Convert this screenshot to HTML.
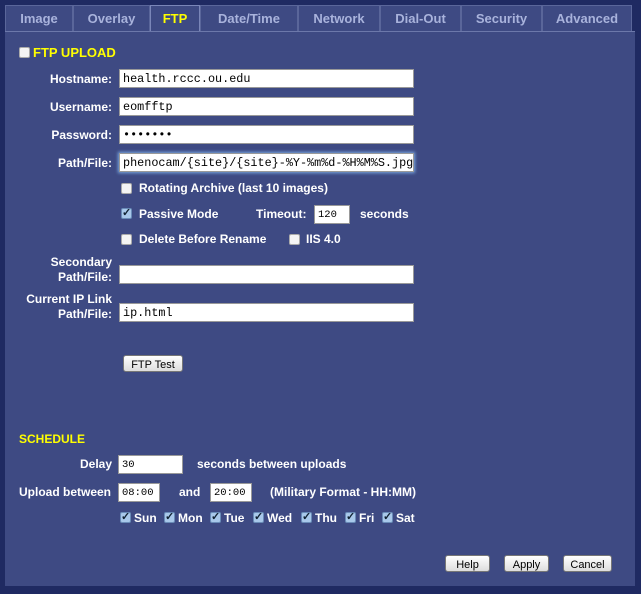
<!DOCTYPE html>
<html><head><style>
*{margin:0;padding:0;box-sizing:border-box}
body{width:641px;height:594px;background:#1f2a62;position:relative;overflow:hidden;font-family:"Liberation Sans",sans-serif;font-size:12px;font-weight:bold;color:#fff}
.a{position:absolute;white-space:nowrap}
.panel{position:absolute;left:5px;top:31px;width:630px;height:555px;background:#3e4a83;border-top:1px solid #6c78aa}
.tab{position:absolute;top:5px;height:26px;background:#3e4a83;border:1px solid #5a669a;border-bottom:none;color:#a9b3dc;font-size:13px;text-align:center;line-height:26px}
.r{text-align:right;width:112px;left:0}
.in{position:absolute;background:#fff;border:1px solid #999;height:19px;font-family:"Liberation Mono",monospace;font-weight:normal;color:#000;font-size:11.8px;display:flex;align-items:center;padding-left:3px;padding-top:1px;white-space:nowrap;overflow:hidden}
.sm{font-size:10.5px}
.cb{position:absolute;width:11px;height:11px;background:#f4f4f4;border:1px solid #aaa;border-radius:2px}
.ck{position:absolute;width:11px;height:11px;background:#a8c8ea;border:1px solid #6a8cb8;border-radius:2px;color:#123;font-size:11px;line-height:9px;text-align:center}
.btn{position:absolute;background:linear-gradient(#fff,#ddd);border:1px solid #777;border-radius:3px;color:#000;font-weight:normal;font-size:11px;display:flex;align-items:center;justify-content:center;height:17px;padding-top:2px}
.y{color:#ffff00}
</style></head><body>
<div class="panel"></div>
<div class="tab" style="left:5px;width:68px">Image</div>
<div class="tab" style="left:73px;width:77px">Overlay</div>
<div class="tab" style="left:150px;width:50px;color:#ffff00;border-color:#7a86b8">FTP</div>
<div class="tab" style="left:200px;width:98px">Date/Time</div>
<div class="tab" style="left:298px;width:82px">Network</div>
<div class="tab" style="left:380px;width:81px">Dial-Out</div>
<div class="tab" style="left:461px;width:81px">Security</div>
<div class="tab" style="left:542px;width:90px">Advanced</div>

<div class="cb" style="left:19px;top:47px"></div>
<div class="a y" style="left:33px;top:45px;font-size:13px">FTP UPLOAD</div>

<div class="a r" style="top:72px">Hostname:</div>
<div class="in" style="left:119px;top:69px;width:295px">health.rccc.ou.edu</div>
<div class="a r" style="top:100px">Username:</div>
<div class="in" style="left:119px;top:97px;width:295px">eomfftp</div>
<div class="a r" style="top:128px">Password:</div>
<div class="in" style="left:119px;top:125px;width:295px">•••••••</div>
<div class="a r" style="top:156px">Path/File:</div>
<div class="in" style="left:119px;top:153px;width:295px;box-shadow:0 0 3px 1px #7aa7e0">phenocam/{site}/{site}-%Y-%m%d-%H%M%S.jpg</div>

<div class="cb" style="left:121px;top:183px"></div>
<div class="a" style="left:139px;top:181px">Rotating Archive (last 10 images)</div>
<div class="ck" style="left:121px;top:208px">✓</div>
<div class="a" style="left:139px;top:207px">Passive Mode</div>
<div class="a" style="left:256px;top:207px">Timeout:</div>
<div class="in sm" style="left:314px;top:205px;width:36px">120</div>
<div class="a" style="left:360px;top:207px">seconds</div>
<div class="cb" style="left:121px;top:234px"></div>
<div class="a" style="left:139px;top:232px">Delete Before Rename</div>
<div class="cb" style="left:289px;top:234px"></div>
<div class="a" style="left:306px;top:232px">IIS 4.0</div>

<div class="a r" style="top:255px;line-height:15px">Secondary<br>Path/File:</div>
<div class="in" style="left:119px;top:265px;width:295px"></div>
<div class="a r" style="top:292px;line-height:15px">Current IP Link<br>Path/File:</div>
<div class="in" style="left:119px;top:303px;width:295px">ip.html</div>
<div class="btn" style="left:123px;top:355px;width:60px">FTP Test</div>

<div class="a y" style="left:19px;top:432px">SCHEDULE</div>
<div class="a" style="left:80px;top:457px">Delay</div>
<div class="in sm" style="left:118px;top:455px;width:65px">30</div>
<div class="a" style="left:197px;top:457px">seconds between uploads</div>
<div class="a" style="left:19px;top:485px">Upload between</div>
<div class="in sm" style="left:118px;top:483px;width:42px">08:00</div>
<div class="a" style="left:179px;top:485px">and</div>
<div class="in sm" style="left:210px;top:483px;width:42px">20:00</div>
<div class="a" style="left:270px;top:485px">(Military Format - HH:MM)</div>

<div class="ck" style="left:120px;top:512px">✓</div><div class="a" style="left:134px;top:511px">Sun</div>
<div class="ck" style="left:164px;top:512px">✓</div><div class="a" style="left:178px;top:511px">Mon</div>
<div class="ck" style="left:210px;top:512px">✓</div><div class="a" style="left:224px;top:511px">Tue</div>
<div class="ck" style="left:253px;top:512px">✓</div><div class="a" style="left:267px;top:511px">Wed</div>
<div class="ck" style="left:301px;top:512px">✓</div><div class="a" style="left:315px;top:511px">Thu</div>
<div class="ck" style="left:345px;top:512px">✓</div><div class="a" style="left:359px;top:511px">Fri</div>
<div class="ck" style="left:382px;top:512px">✓</div><div class="a" style="left:396px;top:511px">Sat</div>

<div class="btn" style="left:445px;top:555px;width:45px">Help</div>
<div class="btn" style="left:504px;top:555px;width:45px">Apply</div>
<div class="btn" style="left:563px;top:555px;width:49px">Cancel</div>
</body></html>
